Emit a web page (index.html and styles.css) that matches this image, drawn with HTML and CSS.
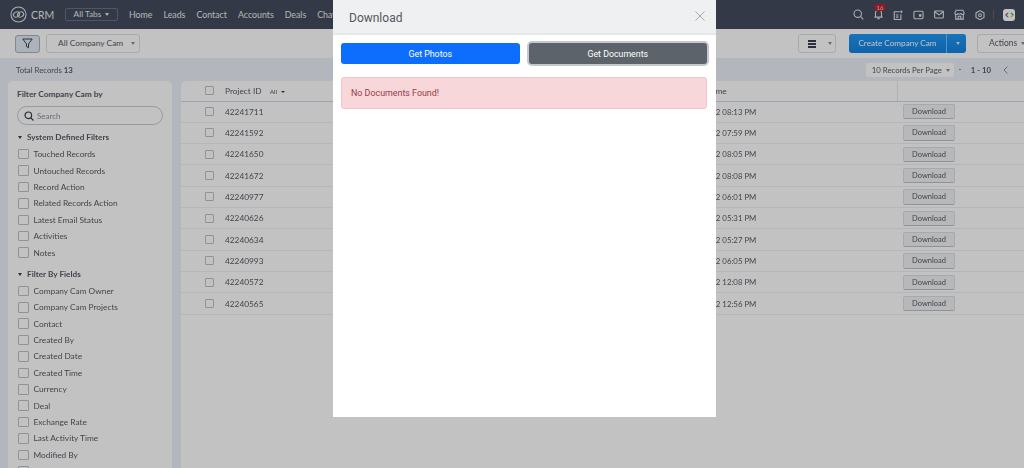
FILE: index.html
```html
<!DOCTYPE html>
<html lang="en">
<head>
    <meta charset="UTF-8">
    <meta name="viewport" content="width=device-width, initial-scale=1.0">
    <title>Company Cam - CRM</title>
    <link rel="stylesheet" href="styles.css">
</head>
<body>
    <div class="page">
        <header class="topbar">
            <div class="logo">
                <svg width="17" height="17" viewBox="0 0 18 18" fill="none" stroke="#e4e6ea" stroke-width="1.1">
                    <circle cx="9" cy="9" r="8"/>
                    <ellipse cx="6.800" cy="9" rx="3.400" ry="2.600" transform="rotate(-30 6.800 9)"/>
                    <ellipse cx="11.200" cy="9" rx="3.400" ry="2.600" transform="rotate(-30 11.200 9)"/>
                </svg>
                <span>CRM</span>
            </div>
            <div class="all-tabs">All Tabs <i class="caret"></i></div>
            <nav class="tabs">
                <a>Home</a><a>Leads</a><a>Contact</a><a>Accounts</a><a>Deals</a><a>Chat</a>
            </nav>
            <div class="top-icons">
                <svg width="11" height="11" viewBox="0 0 14 14" fill="none" stroke="#e4e6ea" stroke-width="1.400"><circle cx="6" cy="6" r="4.700"/><path d="M9.500 9.500l3.600 3.600"/></svg>
                <span class="bell">
                    <svg width="9" height="11" viewBox="0 0 12 14" fill="none" stroke="#e4e6ea" stroke-width="1.400"><path d="M2 10V5a4 4 0 0 1 8 0v5M.5 10.500h11M4.500 12.500h3"/></svg>
                    <b class="badge">16</b>
                </span>
                <svg width="10" height="10" viewBox="0 0 12 12" fill="none" stroke="#e4e6ea" stroke-width="1.300"><path d="M8 2H1.500v9.500h8V5M3.500 6h3M3.500 8.500h3M10 .5v3M8.500 2h3"/></svg>
                <svg width="11" height="10" viewBox="0 0 13 12" fill="none" stroke="#e4e6ea" stroke-width="1.300"><rect x="1" y="1.500" width="11" height="9" rx="1.500"/><rect x="7" y="5" width="3" height="3" fill="#e4e6ea" stroke="none"/></svg>
                <svg width="10" height="9" viewBox="0 0 13 11" fill="none" stroke="#e4e6ea" stroke-width="1.400"><rect x=".8" y="1" width="11.400" height="9" rx="1"/><path d="M1 2l5.500 4L12 2"/></svg>
                <svg width="11" height="11" viewBox="0 0 13 13" fill="none" stroke="#e4e6ea" stroke-width="1.300"><path d="M2.500 1.500h8l1.500 3a1.800 1.800 0 0 1-3.700.4 1.900 1.900 0 0 1-3.600 0A1.800 1.800 0 0 1 1 4.500zM2 6.500v5.500h9V6.500M5 12V8.500h3V12"/></svg>
                <svg width="10" height="10" viewBox="0 0 13 13" fill="none" stroke="#e4e6ea" stroke-width="1.400"><path d="M6.500 .8l5.200 3v5.800l-5.200 3-5.200-3V3.800z"/><circle cx="6.500" cy="6.700" r="1.800"/></svg>
                <span class="divider"></span>
                <span class="avatar">
                    <svg width="9" height="6" viewBox="0 0 12 8"><path d="M0 4l3-3h2L2.500 4z" fill="#e0453a"/><path d="M0 4l3 3h2L2.500 4z" fill="#3a8fe0"/><path d="M12 4L9 1H7l2.500 3z" fill="#3cb054"/><path d="M12 4L9 7H7l2.500-3z" fill="#f0b92e"/></svg>
                </span>
            </div>
        </header>

        <div class="toolbar">
            <button class="filter-toggle">
                <svg width="11" height="11" viewBox="0 0 11 11" fill="none" stroke="#39404c" stroke-width="1"><path d="M.8 1h9.400L6.500 6v3.800L4.500 8.500V6z"/></svg>
            </button>
            <div class="view-select">All Company Cam <i class="caret gray"></i></div>
            <div class="toolbar-right">
                <div class="list-view">
                    <svg width="8" height="8" viewBox="0 0 9 8" fill="#39404c" preserveAspectRatio="none"><rect width="9" height="2"/><rect y="3" width="9" height="2"/><rect y="6" width="9" height="2"/></svg>
                    <i class="caret gray"></i>
                </div>
                <div class="create-btn"><span>Create Company Cam</span><em><i class="caret"></i></em></div>
                <div class="actions">Actions <i class="caret gray"></i></div>
            </div>
        </div>

        <div class="info-row">
            <div class="total">Total Records <b>13</b></div>
            <div class="paging">
                <div class="per-page">10 Records Per Page <i class="caret gray"></i></div>
                <span class="dot"></span>
                <b>1 - 10</b>
                <svg width="5" height="8" viewBox="0 0 5 8" fill="none" stroke="#8a8f99"><path d="M4.500.5L1 4l3.500 3.500"/></svg>
            </div>
        </div>

        <main class="content">
            <aside class="sidebar">
                <h3>Filter Company Cam by</h3>
                <div class="search">
                    <svg width="10" height="10" viewBox="0 0 10 10" fill="none" stroke="#39404c" stroke-width="1.200"><circle cx="4.300" cy="4.300" r="3.300"/><path d="M6.800 6.800L9.500 9.500"/></svg>
                    Search
                </div>
                <h4><i class="caret dark"></i>System Defined Filters</h4>
                <ul>
                    <li>Touched Records</li>
                    <li>Untouched Records</li>
                    <li>Record Action</li>
                    <li>Related Records Action</li>
                    <li>Latest Email Status</li>
                    <li>Activities</li>
                    <li>Notes</li>
                </ul>
                <h4><i class="caret dark"></i>Filter By Fields</h4>
                <ul>
                    <li>Company Cam Owner</li>
                    <li>Company Cam Projects</li>
                    <li>Contact</li>
                    <li>Created By</li>
                    <li>Created Date</li>
                    <li>Created Time</li>
                    <li>Currency</li>
                    <li>Deal</li>
                    <li>Exchange Rate</li>
                    <li>Last Activity Time</li>
                    <li>Modified By</li>
                    <li></li>
                </ul>
            </aside>

            <section class="records">
                <table>
                    <thead>
                        <tr>
                            <th class="col-check"><span class="box"></span></th>
                            <th class="col-id">Project ID <small>All <i class="caret dark"></i></small></th>
                            <th class="col-time">Created Time</th>
                            <th class="col-action"></th>
                        </tr>
                    </thead>
                    <tbody>
                        <tr><td class="col-check"><span class="box"></span></td><td>42241711</td><td class="col-time">Nov 21, 2022 08:13 PM</td><td class="col-action"><button>Download</button></td></tr>
                        <tr><td class="col-check"><span class="box"></span></td><td>42241592</td><td class="col-time">Nov 21, 2022 07:59 PM</td><td class="col-action"><button>Download</button></td></tr>
                        <tr><td class="col-check"><span class="box"></span></td><td>42241650</td><td class="col-time">Nov 21, 2022 08:05 PM</td><td class="col-action"><button>Download</button></td></tr>
                        <tr><td class="col-check"><span class="box"></span></td><td>42241672</td><td class="col-time">Nov 21, 2022 08:08 PM</td><td class="col-action"><button>Download</button></td></tr>
                        <tr><td class="col-check"><span class="box"></span></td><td>42240977</td><td class="col-time">Nov 21, 2022 06:01 PM</td><td class="col-action"><button>Download</button></td></tr>
                        <tr><td class="col-check"><span class="box"></span></td><td>42240626</td><td class="col-time">Nov 21, 2022 05:31 PM</td><td class="col-action"><button>Download</button></td></tr>
                        <tr><td class="col-check"><span class="box"></span></td><td>42240634</td><td class="col-time">Nov 21, 2022 05:27 PM</td><td class="col-action"><button>Download</button></td></tr>
                        <tr><td class="col-check"><span class="box"></span></td><td>42240993</td><td class="col-time">Nov 21, 2022 06:05 PM</td><td class="col-action"><button>Download</button></td></tr>
                        <tr><td class="col-check"><span class="box"></span></td><td>42240572</td><td class="col-time">Nov 21, 2022 12:08 PM</td><td class="col-action"><button>Download</button></td></tr>
                        <tr><td class="col-check"><span class="box"></span></td><td>42240565</td><td class="col-time">Nov 21, 2022 12:56 PM</td><td class="col-action"><button>Download</button></td></tr>
                    </tbody>
                </table>
            </section>
        </main>
    </div>

    <div class="backdrop"></div>

    <div class="modal">
        <div class="modal-head">
            <h2>Download</h2>
            <svg width="10" height="10" viewBox="0 0 11 11" fill="none" stroke="#9a9da1" stroke-width="1"><path d="M.5.500l10 10M10.500.500l-10 10"/></svg>
        </div>
        <div class="modal-body">
            <div class="modal-btns">
                <button class="btn-photos">Get Photos</button>
                <button class="btn-docs">Get Documents</button>
            </div>
            <div class="alert">No Documents Found!</div>
        </div>
    </div>
</body>
</html>
```

FILE: styles.css
```css
* {
    box-sizing: border-box;
}
html, body {
    margin: 0;
    height: 468px;
    overflow: hidden;
}
body {
    font-family: Lato, "Open Sans", sans-serif;
    font-size: 8.3px;
    color: #565b64;
    background: #ebf0f8;
}
button {
    font-family: inherit;
}
.page {
    height: 468px;
    overflow: hidden;
    filter: blur(0.45px);
}
.caret {
    display: inline-block;
    width: 0;
    height: 0;
    margin-left: 2px;
    vertical-align: middle;
    border-left: 2.5px solid transparent;
    border-right: 2.5px solid transparent;
    border-top: 3px solid #e4e6ea;
}
.caret.gray {
    border-top-color: #8a8f99;
}
.caret.dark {
    border-top-color: #39404c;
}

/* top bar */
.topbar {
    display: flex;
    align-items: center;
    height: 29px;
    padding-left: 10px;
    background: #444c5c;
    color: #e9ebef;
}
.logo {
    display: flex;
    align-items: center;
    gap: 4px;
    width: 55px;
    font-size: 10.5px;
}
.all-tabs {
    width: 53px;
    height: 13px;
    line-height: 11px;
    margin-right: 11px;
    text-align: center;
    font-size: 8.3px;
    white-space: nowrap;
    border: 1px solid #6a7282;
    border-radius: 2px;
}
.tabs {
    display: flex;
    gap: 11px;
    font-size: 8.8px;
}
.top-icons {
    display: flex;
    align-items: center;
    gap: 10px;
    margin-left: auto;
    padding-right: 9px;
}
.bell {
    position: relative;
    display: flex;
}
.badge {
    position: absolute;
    top: -5px;
    left: 1px;
    width: 10px;
    text-align: center;
    font-size: 6px;
    font-weight: 400;
    line-height: 7px;
    color: #f3c9c9;
    background: #c8202c;
    border-radius: 1px;
}
.divider {
    width: 1px;
    height: 9px;
    margin-left: -2px;
    background: #5f6776;
}
.avatar {
    display: flex;
    align-items: center;
    justify-content: center;
    width: 12px;
    height: 12px;
    margin-left: -1px;
    background: #fff;
    border-radius: 3px;
}

/* toolbar */
.toolbar {
    display: flex;
    align-items: center;
    height: 29px;
    padding-left: 15px;
    background: #fff;
}
.filter-toggle {
    display: flex;
    align-items: center;
    justify-content: center;
    width: 25px;
    height: 18px;
    padding: 0;
    margin-right: 6px;
    background: #e3eaf5;
    border: 1px solid #a9b3c2;
    border-radius: 3px;
}
.view-select {
    width: 94px;
    height: 19px;
    line-height: 17px;
    padding-left: 11px;
    font-size: 8.4px;
    white-space: nowrap;
    border: 1px solid #dde0e5;
    border-radius: 3px;
}
.view-select .caret {
    margin-left: 6px;
}
.toolbar-right {
    display: flex;
    align-items: center;
    margin-left: auto;
}
.list-view {
    display: flex;
    align-items: center;
    gap: 10px;
    width: 38px;
    height: 19px;
    padding-left: 9px;
    margin-right: 13px;
    border: 1px solid #dde0e5;
    border-radius: 3px;
}
.create-btn {
    display: flex;
    height: 19px;
    line-height: 19px;
    margin-right: 11px;
    font-size: 8.2px;
    color: #fff;
    background: linear-gradient(#1f98f5, #1483e0);
    border-radius: 3px;
}
.create-btn span {
    width: 97px;
    text-align: center;
}
.create-btn em {
    display: flex;
    align-items: center;
    justify-content: center;
    width: 20px;
    border-left: 1px solid #7ec0f5;
}
.actions {
    width: 47px;
    height: 19px;
    line-height: 17px;
    padding-left: 11px;
    font-size: 8.5px;
    white-space: nowrap;
    border: 1px solid #dde0e5;
    border-right: 0;
    border-radius: 3px 0 0 3px;
}

/* total row */
.info-row {
    display: flex;
    align-items: center;
    justify-content: space-between;
    height: 23px;
    padding-left: 16px;
    padding-right: 16px;
    font-size: 7.8px;
}
.paging {
    display: flex;
    align-items: center;
    gap: 5px;
}
.per-page {
    width: 88px;
    height: 14px;
    line-height: 14px;
    padding-left: 6px;
    white-space: nowrap;
    background: #fff;
    border-radius: 2px;
}
.dot {
    width: 2px;
    height: 1px;
    margin-right: 5px;
    background: #8a8f99;
}
.paging svg {
    margin-left: 7px;
}

/* sidebar + table */
.content {
    display: flex;
    gap: 9px;
    padding-left: 8px;
}
.sidebar {
    flex: none;
    width: 164px;
    height: 400px;
    padding: 7px 9px;
    background: #fff;
    border-radius: 5px 5px 0 0;
}
.sidebar h3 {
    margin: 0 0 5px;
    font-size: 8.3px;
    line-height: 13px;
    font-weight: 700;
}
.search {
    display: flex;
    align-items: center;
    gap: 3px;
    height: 19px;
    margin-bottom: 4px;
    padding-left: 6px;
    font-size: 8px;
    color: #8a8f99;
    border: 1px solid #c6cad1;
    border-radius: 10px;
}
.sidebar h4 {
    margin: 0 0 1px;
    font-size: 8.2px;
    line-height: 16px;
    font-weight: 700;
}
.sidebar h4 .caret {
    margin: 0 5px 0 1px;
}
.sidebar ul {
    margin: 0 0 5px;
    padding: 0;
    list-style: none;
}
.sidebar li {
    display: flex;
    align-items: center;
    gap: 5px;
    height: 16.4px;
    margin-left: 1px;
}
.sidebar li::before {
    content: "";
    flex: none;
    width: 8.5px;
    height: 8.5px;
    border: 1px solid #bcc0c7;
    border-radius: 1px;
}
.records {
    flex: 1;
    height: 400px;
    background: #fff;
    border-radius: 5px 0 0 0;
}
table {
    width: 100%;
    table-layout: fixed;
    border-collapse: collapse;
}
th {
    height: 20px;
    padding: 0;
    font-weight: 400;
    text-align: left;
    border-bottom: 1px solid #c9d6ea;
}
th small {
    margin-left: 6px;
    font-size: 6.5px;
}
th small .caret {
    border-left-width: 2px;
    border-right-width: 2px;
    border-top-width: 2.5px;
}
td {
    height: 21.33px;
    padding: 0;
    border-bottom: 1px solid #eef0f2;
}
.box {
    display: block;
    width: 9px;
    height: 9px;
    border: 1px solid #bcc0c7;
    border-radius: 1px;
    margin-left: 24px;
}
.col-check {
    width: 44px;
}
.col-id {
    width: 445px;
}
.col-time {
    width: 227px;
    padding-left: 3.5px;
    font-size: 7.8px;
}
th.col-time {
    padding-left: 8px;
    font-size: 8.3px;
}
.col-action {
    padding-left: 6px;
}
th.col-action {
    border-left: 1px solid #e8e9ec;
}
.col-action button {
    display: block;
    width: 52px;
    height: 15.5px;
    padding: 0;
    font-size: 7.5px;
    color: #565b64;
    background: #f1f2f4;
    border: 1px solid #dcdee2;
    border-bottom-color: #bfc2c8;
    border-radius: 2px;
}

/* modal */
.backdrop {
    position: fixed;
    inset: 0;
    background: rgba(0, 0, 0, 0.24);
}
.modal {
    position: fixed;
    top: 0;
    left: 333px;
    width: 383px;
    height: 417px;
    background: #fff;
    font-family: Roboto, "Open Sans", sans-serif;
}
.modal-head {
    display: flex;
    align-items: center;
    justify-content: space-between;
    height: 35px;
    padding: 0 11px 2px 16px;
    background: #eff0f2;
    border-bottom: 2px solid #e6e7e9;
}
.modal-head h2 {
    margin: 4px 0 0;
    font-size: 12px;
    font-weight: 400;
    color: #55585d;
}
.modal-body {
    padding: 8px 9px 0 8px;
}
.modal-btns {
    display: flex;
    gap: 9px;
    margin-bottom: 13px;
}
.modal-btns button {
    flex: 1;
    height: 21px;
    padding: 0;
    font-size: 8.8px;
    color: #fff;
    border-radius: 3px;
    border: 0;
}
.btn-photos {
    background: #0d6efd;
}
.btn-docs {
    background: #5c636a;
    box-shadow: 0 0 0 2px #c5c8cc;
}
.alert {
    height: 32px;
    line-height: 30px;
    padding-left: 9px;
    font-size: 8.9px;
    color: #93404a;
    background: #f8d7da;
    border: 1px solid #f5c2c7;
    border-radius: 3px;
}
```
